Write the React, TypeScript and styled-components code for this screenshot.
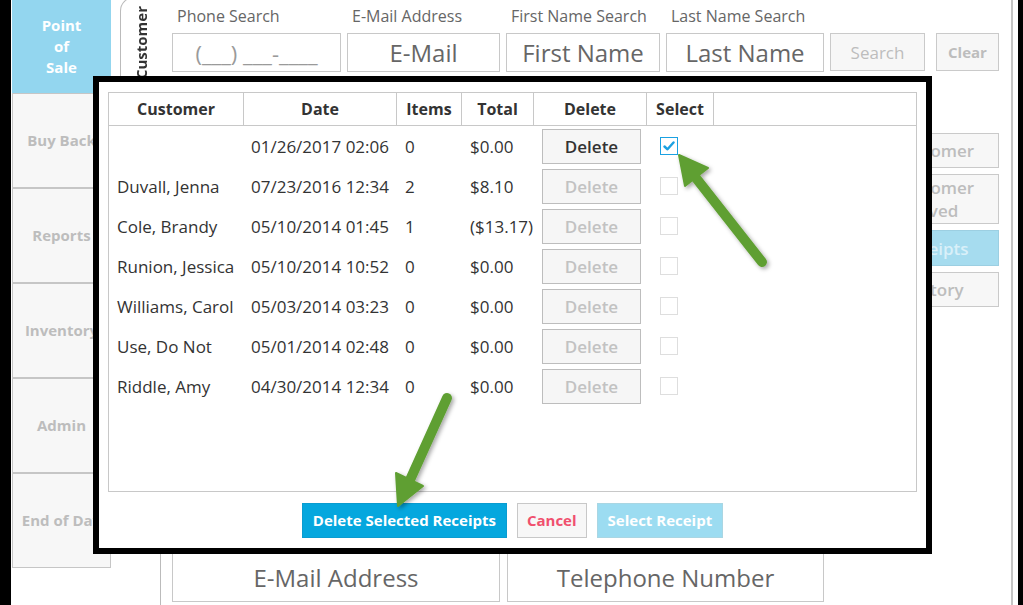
import React from "react";
import styled, { createGlobalStyle } from "styled-components";

type Receipt = {
    customer: string;
    date: string;
    items: string;
    total: string;
    active?: boolean;
    checked?: boolean;
};

const receipts: Receipt[] = [
    { customer: "", date: "01/26/2017 02:06", items: "0", total: "$0.00", active: true, checked: true },
    { customer: "Duvall, Jenna", date: "07/23/2016 12:34", items: "2", total: "$8.10" },
    { customer: "Cole, Brandy", date: "05/10/2014 01:45", items: "1", total: "($13.17)" },
    { customer: "Runion, Jessica", date: "05/10/2014 10:52", items: "0", total: "$0.00" },
    { customer: "Williams, Carol", date: "05/03/2014 03:23", items: "0", total: "$0.00" },
    { customer: "Use, Do Not", date: "05/01/2014 02:48", items: "0", total: "$0.00" },
    { customer: "Riddle, Amy", date: "04/30/2014 12:34", items: "0", total: "$0.00" },
];

const navItems = ["Buy Back", "Reports", "Inventory", "Admin", "End of Day"];

const GlobalStyle = createGlobalStyle`
    html, body {
        margin: 0;
        padding: 0;
        background: #fff;
    }
    body {
        font-family: "Open Sans", "Noto Sans", sans-serif;
    }
    * {
        box-sizing: border-box;
    }
`;

const Screen = styled.div`
    position: relative;
    width: 1023px;
    height: 605px;
    overflow: hidden;
    display: flex;
    background: #fff;
    border-left: 11px solid #000;
    border-right: 5px solid #000;
    padding: 0 5px 0 1px;
`;

const Sidebar = styled.nav`
    width: 99px;
    flex-shrink: 0;
    margin-right: 9px;
    display: flex;
    flex-direction: column;
`;

const NavTile = styled.div<{ $active?: boolean }>`
    height: ${(p) => (p.$active ? "93px" : "95px")};
    display: flex;
    align-items: center;
    justify-content: center;
    text-align: center;
    white-space: nowrap;
    font-size: 15px;
    font-weight: 700;
    line-height: 21px;
    color: ${(p) => (p.$active ? "#fff" : "#bdbdbd")};
    background: ${(p) => (p.$active ? "#93d6ef" : "#f7f7f7")};
    border: ${(p) => (p.$active ? "none" : "1px solid #c6c6c6")};
`;

const TabColumn = styled.div`
    width: 40px;
    flex-shrink: 0;
    display: flex;
    flex-direction: column;
`;

const CustomerTab = styled.div`
    position: relative;
    z-index: 1;
    height: 260px;
    margin-top: -3px;
    margin-right: -1px;
    padding-top: 8px;
    display: flex;
    justify-content: center;
    align-items: flex-start;
    background: #fff;
    border: 1px solid #bbb;
    border-right: none;
    border-radius: 14px 0 0 14px;
`;

const TabLabel = styled.span`
    writing-mode: vertical-rl;
    transform: rotate(180deg);
    font-size: 15px;
    font-weight: 700;
    color: #333;
`;

const Panel = styled.section`
    flex: 1;
    display: flex;
    flex-direction: column;
    border-left: 1px solid #bbb;
    border-right: 2px solid #c4c4c4;
    padding: 5px 12px 3px 11px;
`;

const SearchRow = styled.div`
    display: flex;
    align-items: flex-end;
    gap: 6px;
`;

const Field = styled.div<{ $w: number }>`
    width: ${(p) => p.$w}px;
    display: flex;
    flex-direction: column;
`;

const FieldLabel = styled.div`
    padding-left: 5px;
    margin-bottom: 6px;
    font-size: 16px;
    line-height: 22px;
    color: #666;
    white-space: nowrap;
`;

const InputBox = styled.div<{ $h?: number; $muted?: boolean }>`
    height: ${(p) => p.$h ?? 39}px;
    display: flex;
    align-items: center;
    justify-content: center;
    border: 1px solid #c8c8c8;
    background: #fff;
    font-size: ${(p) => (p.$muted ? "22px" : "24px")};
    color: ${(p) => (p.$muted ? "#9a9a9a" : "#666")};
    white-space: nowrap;
`;

const GreyButton = styled.div<{ $w: number; $bold?: boolean }>`
    width: ${(p) => p.$w}px;
    height: 38px;
    margin-bottom: 1px;
    display: flex;
    align-items: center;
    justify-content: center;
    background: #f7f7f7;
    border: 1px solid #cacaca;
    color: #bdbdbd;
    font-size: ${(p) => (p.$bold ? "15px" : "17px")};
    font-weight: ${(p) => (p.$bold ? 700 : 400)};
`;

const Middle = styled.div`
    flex: 1;
    display: flex;
    justify-content: flex-end;
    padding-top: 61px;
`;

const SideColumn = styled.div`
    width: 130px;
    display: flex;
    flex-direction: column;
    gap: 6px;
`;

const SideButton = styled.div<{ $h: number; $blue?: boolean }>`
    height: ${(p) => p.$h}px;
    display: flex;
    align-items: center;
    justify-content: center;
    text-align: center;
    font-size: 17px;
    font-weight: 600;
    line-height: 23px;
    color: ${(p) => (p.$blue ? "#d9f0f9" : "#bdbdbd")};
    background: ${(p) => (p.$blue ? "#a6dcef" : "#f7f7f7")};
    border: 1px solid ${(p) => (p.$blue ? "#9ccfe2" : "#cacaca")};
`;

const BottomRow = styled.div`
    display: flex;
    gap: 7px;
`;

const Modal = styled.div`
    position: absolute;
    left: 82px;
    top: 76px;
    width: 839px;
    height: 478px;
    z-index: 5;
    display: flex;
    flex-direction: column;
    background: #fff;
    border: 6px solid #000;
    padding: 10px 9px 0 9px;
`;

const Table = styled.div`
    height: 400px;
    border: 1px solid #c8c8c8;
    display: flex;
    flex-direction: column;
`;

const cols = "135px 153px 65px 72px 113px 67px 1fr";

const HeaderRow = styled.div`
    display: grid;
    grid-template-columns: ${cols};
    height: 33px;
    border-bottom: 1px solid #c8c8c8;
`;

const HeadCell = styled.div<{ $last?: boolean }>`
    display: flex;
    align-items: center;
    justify-content: center;
    font-size: 16px;
    font-weight: 700;
    color: #333;
    border-right: ${(p) => (p.$last ? "none" : "1px solid #c8c8c8")};
`;

const Row = styled.div`
    display: grid;
    grid-template-columns: ${cols};
    height: 40px;
`;

const Cell = styled.div<{ $pad?: number }>`
    display: flex;
    align-items: center;
    padding-left: ${(p) => p.$pad ?? 8}px;
    font-size: 17px;
    color: #333;
    white-space: nowrap;
`;

const DeleteButton = styled.div<{ $active?: boolean }>`
    width: 99px;
    height: 35px;
    display: flex;
    align-items: center;
    justify-content: center;
    background: #f6f6f6;
    border: 1px solid #bdbdbd;
    font-size: 17px;
    font-weight: 600;
    color: ${(p) => (p.$active ? "#333" : "#c2c2c2")};
`;

const CheckBox = styled.span<{ $checked?: boolean }>`
    width: 18px;
    height: 18px;
    display: flex;
    align-items: center;
    justify-content: center;
    background: #fff;
    border: 1px solid ${(p) => (p.$checked ? "#1ba1e2" : "#dedede")};
`;

const Footer = styled.div`
    flex: 1;
    display: flex;
    align-items: center;
    justify-content: center;
    gap: 10px;
`;

const FooterButton = styled.div<{ $kind: "primary" | "cancel" | "faded" }>`
    height: 35px;
    padding: 0 ${(p) => (p.$kind === "cancel" ? 9 : 10)}px;
    display: flex;
    align-items: center;
    font-size: 15px;
    font-weight: 700;
    color: ${(p) => (p.$kind === "cancel" ? "#f0506e" : "#fff")};
    background: ${(p) =>
        p.$kind === "primary" ? "#05a7de" : p.$kind === "cancel" ? "#f7f7f7" : "#9cdcf1"};
    border: 1px solid
        ${(p) => (p.$kind === "primary" ? "#0a9cd0" : p.$kind === "cancel" ? "#c8c8c8" : "#a9d6e3")};
`;

const Overlay = styled.svg`
    position: absolute;
    left: -11px;
    top: 0;
    z-index: 10;
    pointer-events: none;
`;

const Arrow = ({ tail, base, tip, c1, c2 }: { tail: number[]; base: number[]; tip: number[]; c1: number[]; c2: number[] }) => (
    <g filter="url(#shadow)">
        <line x1={tail[0]} y1={tail[1]} x2={base[0]} y2={base[1]} stroke="#5f9f32" strokeWidth={10} strokeLinecap="round" />
        <polygon points={`${tip.join(",")} ${c1.join(",")} ${c2.join(",")}`} fill="#5f9f32" stroke="#5f9f32" strokeWidth={2} strokeLinejoin="round" />
    </g>
);

export default function App() {
    return (
        <>
            <GlobalStyle />
            <Screen>
                <Sidebar>
                    <NavTile $active>
                        Point
                        <br />
                        of
                        <br />
                        Sale
                    </NavTile>
                    {navItems.map((n) => (
                        <NavTile key={n}>{n}</NavTile>
                    ))}
                </Sidebar>

                <TabColumn>
                    <CustomerTab>
                        <TabLabel>Customer</TabLabel>
                    </CustomerTab>
                </TabColumn>

                <Panel>
                    <SearchRow>
                        <Field $w={169}>
                            <FieldLabel>Phone Search</FieldLabel>
                            <InputBox $muted>(___) ___-____</InputBox>
                        </Field>
                        <Field $w={153}>
                            <FieldLabel>E-Mail Address</FieldLabel>
                            <InputBox>E-Mail</InputBox>
                        </Field>
                        <Field $w={154}>
                            <FieldLabel>First Name Search</FieldLabel>
                            <InputBox>First Name</InputBox>
                        </Field>
                        <Field $w={158}>
                            <FieldLabel>Last Name Search</FieldLabel>
                            <InputBox>Last Name</InputBox>
                        </Field>
                        <GreyButton $w={95}>Search</GreyButton>
                        <GreyButton $w={63} $bold style={{ marginLeft: 5 }}>
                            Clear
                        </GreyButton>
                    </SearchRow>

                    <Middle>
                        <SideColumn>
                            <SideButton $h={35}>Customer</SideButton>
                            <SideButton $h={50}>
                                Customer
                                <br />
                                Saved
                            </SideButton>
                            <SideButton $h={36} $blue>
                                Receipts
                            </SideButton>
                            <SideButton $h={35}>History</SideButton>
                        </SideColumn>
                    </Middle>

                    <BottomRow>
                        <InputBox $h={49} style={{ width: 328 }}>
                            E-Mail Address
                        </InputBox>
                        <InputBox $h={49} style={{ width: 317 }}>
                            Telephone Number
                        </InputBox>
                    </BottomRow>
                </Panel>

                <Modal>
                    <Table>
                        <HeaderRow>
                            <HeadCell>Customer</HeadCell>
                            <HeadCell>Date</HeadCell>
                            <HeadCell>Items</HeadCell>
                            <HeadCell>Total</HeadCell>
                            <HeadCell>Delete</HeadCell>
                            <HeadCell>Select</HeadCell>
                            <HeadCell $last />
                        </HeaderRow>
                        {receipts.map((r, i) => (
                            <Row key={i}>
                                <Cell>{r.customer}</Cell>
                                <Cell $pad={7}>{r.date}</Cell>
                                <Cell>{r.items}</Cell>
                                <Cell>{r.total}</Cell>
                                <Cell>
                                    <DeleteButton $active={r.active}>Delete</DeleteButton>
                                </Cell>
                                <Cell $pad={13}>
                                    <CheckBox $checked={r.checked}>
                                        {r.checked && (
                                            <svg width="12" height="10" viewBox="0 0 12 10">
                                                <path d="M1.5 5.5 L4.5 8.3 L10.5 1.5" fill="none" stroke="#1ba1e2" strokeWidth="2.4" strokeLinecap="round" strokeLinejoin="round" />
                                            </svg>
                                        )}
                                    </CheckBox>
                                </Cell>
                                <Cell />
                            </Row>
                        ))}
                    </Table>
                    <Footer>
                        <FooterButton $kind="primary">Delete Selected Receipts</FooterButton>
                        <FooterButton $kind="cancel">Cancel</FooterButton>
                        <FooterButton $kind="faded">Select Receipt</FooterButton>
                    </Footer>
                </Modal>

                <Overlay width="1023" height="605" viewBox="0 0 1023 605">
                    <defs>
                        <filter id="shadow" x="-20%" y="-20%" width="140%" height="140%">
                            <feDropShadow dx="2" dy="2" stdDeviation="2" floodColor="#000" floodOpacity="0.35" />
                        </filter>
                    </defs>
                    <Arrow tail={[762, 262]} base={[696, 178]} tip={[679, 155]} c1={[708, 168]} c2={[685, 186]} />
                    <Arrow tail={[447, 398]} base={[410, 480]} tip={[398, 506]} c1={[423, 486]} c2={[396, 473]} />
                </Overlay>
            </Screen>
        </>
    );
}
